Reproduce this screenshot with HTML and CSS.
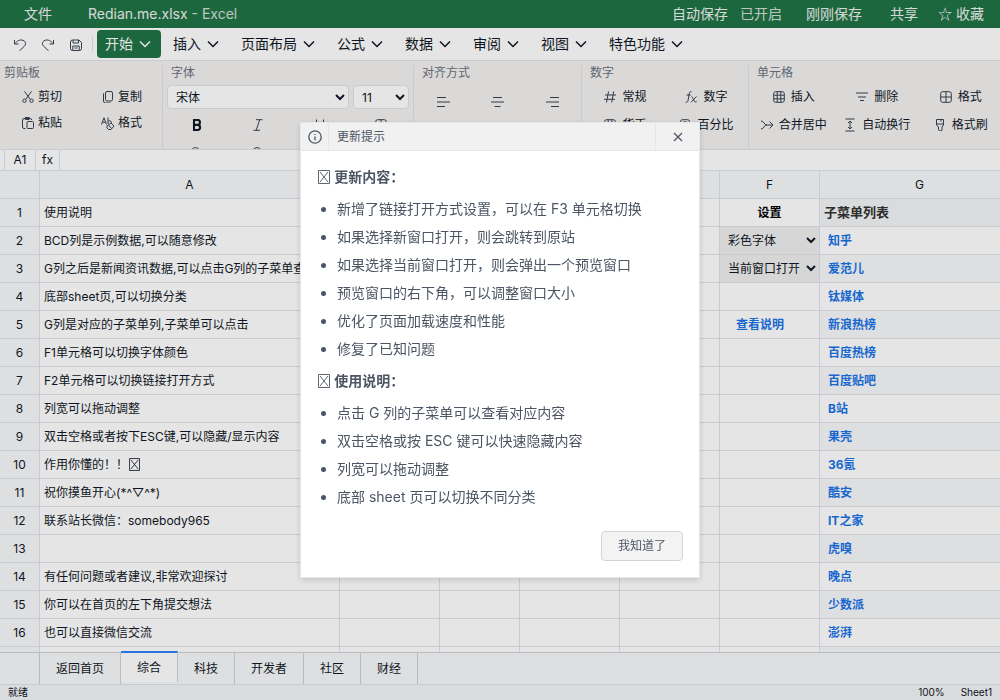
FILE: index.html
```html
<!DOCTYPE html>
<html lang="zh-CN">
<head>
    <meta charset="UTF-8">
    <meta name="viewport" content="width=device-width, initial-scale=1.0">
    <title>Redian.me.xlsx - Excel</title>
    <link rel="stylesheet" href="styles.css">
</head>
<body>
    <svg class="sprite">
        <symbol id="chevron" viewBox="0 0 16 16"><path d="M3 5.5l5 5 5-5"/></symbol>
        <symbol id="cell" viewBox="0 0 12 12"><rect x=".7" y=".7" width="10.6" height="10.6" rx="2"/><path d="M.7 6h10.6M6 .7v10.6"/></symbol>
        <symbol id="table" viewBox="0 0 12 12"><rect x=".7" y=".7" width="10.6" height="10.6" rx="2"/><path d="M.7 4.2h10.6M.7 7.8h10.6M4.2.7v10.6M7.8.7v10.6"/></symbol>
        <symbol id="box" viewBox="0 0 12 14"><path d="M.5.5h11v13H.5zM2 2l8 10M10 2L2 12"/></symbol>
    </svg>

    <div class="app">
        <div class="title-bar">
            <span class="file">文件</span>
            <span class="name">Redian.me.xlsx <span class="dim">- Excel</span></span>
            <div class="title-right">
                <span>自动保存</span>
                <span class="dim state">已开启</span>
                <span class="saved">刚刚保存</span>
                <span class="share">共享</span>
                <span><span class="star">☆</span> 收藏</span>
            </div>
        </div>

        <div class="menu-bar">
            <div class="quick">
                <svg class="q" viewBox="0 0 14 14"><path d="M1.500 3v4h4M1.800 6.700C4 4 7 2.200 10 3.300c3 1.200 3.200 4 1.300 6L6.300 14"/></svg>
                <svg class="q" viewBox="0 0 14 14"><path d="M12.500 3v4h-4M12.200 6.700C10 4 7 2.200 4 3.300c-3 1.200-3.200 4-1.300 6l5 4.700"/></svg>
                <svg class="q save" viewBox="0 0 14 14"><path d="M1.500 4a2 2 0 0 1 2-2H10l2.500 2.500v6a2 2 0 0 1-2 2h-7a2 2 0 0 1-2-2zM4 2v3h5.500V2M3.800 12.500V8h6.400v4.500M5.500 10h3"/></svg>
            </div>
            <span class="menu active">开始<svg><use href="#chevron"/></svg></span>
            <span class="menu">插入<svg><use href="#chevron"/></svg></span>
            <span class="menu">页面布局<svg><use href="#chevron"/></svg></span>
            <span class="menu">公式<svg><use href="#chevron"/></svg></span>
            <span class="menu">数据<svg><use href="#chevron"/></svg></span>
            <span class="menu">审阅<svg><use href="#chevron"/></svg></span>
            <span class="menu">视图<svg><use href="#chevron"/></svg></span>
            <span class="menu">特色功能<svg><use href="#chevron"/></svg></span>
        </div>

        <div class="ribbon">
            <div class="group clipboard">
                <div class="label">剪贴板</div>
                <div class="tools">
                    <span class="tool"><svg viewBox="0 0 12 12"><circle cx="2.500" cy="9.700" r="1.700"/><circle cx="9.500" cy="9.700" r="1.700"/><path d="M2.500.3l5.700 8M9.500.3l-5.700 8"/></svg>剪切</span>
                    <span class="tool"><svg viewBox="0 0 12 12"><rect x="3.500" y=".5" width="7" height="9.500" rx="1.500"/><path d="M1.500 2.500v7.500a2 2 0 0 0 2 2h5"/></svg>复制</span>
                    <span class="tool"><svg viewBox="0 0 12 12"><path d="M3.500 11.500H2a1.500 1.500 0 0 1-1.500-1.500V3A1.500 1.500 0 0 1 2 1.500h6.500A1.200 1.200 0 0 1 9.500 3M3.300.5h3.900v2H3.300z"/><rect x="5" y="4.500" width="6.500" height="7" rx="1"/></svg>粘贴</span>
                    <span class="tool"><svg class="brush" viewBox="0 0 14 13"><path d="M.5 7.500L3 .8l2.500 6.700M1.400 5.300h3.200M7 .5V7M7 4.500c2-2 4 0 3 2M6 9l4-3 3 3-3 3.500H7.500L6 11zM7.500 8l3 3.500"/></svg>格式</span>
                </div>
            </div>
            <div class="group font">
                <div class="label">字体</div>
                <div class="selects">
                    <select class="family"><option>宋体</option></select>
                    <select class="size"><option>11</option></select>
                </div>
                <div class="tools">
                    <span class="tool"><svg class="bold" viewBox="0 0 12 12"><path d="M3 1h3.500a2.400 2.400 0 0 1 0 4.900H3zM3 5.900h4a2.600 2.600 0 0 1 0 5.100H3z"/></svg></span>
                    <span class="tool"><svg viewBox="0 0 12 12"><path d="M4 .7h6.500M1.500 11.300H8M7.700.7l-3.500 10.600"/></svg></span>
                    <span class="tool"><svg viewBox="0 0 12 12"><path d="M2.500.5v5a3.500 3.500 0 0 0 7 0v-5M1.500 11.500h9"/></svg></span>
                    <span class="tool"><svg><use href="#cell"/></svg></span>
                    <span class="tool"><svg viewBox="0 0 12 12"><circle cx="4.500" cy="5" r="4.400"/></svg></span>
                    <span class="tool"><svg viewBox="0 0 12 12"><circle cx="5" cy="5" r="4.400"/></svg></span>
                </div>
            </div>
            <div class="group align">
                <div class="label">对齐方式</div>
                <div class="tools">
                    <span class="tool"><svg viewBox="0 0 13 12"><path d="M0 1.500h9M0 6h13M0 10.500h8"/></svg></span>
                    <span class="tool"><svg viewBox="0 0 13 12"><path d="M2 1.500h9M0 6h13M3.500 10.500h6"/></svg></span>
                    <span class="tool"><svg viewBox="0 0 13 12"><path d="M4 1.500h9M0 6h13M5 10.500h8"/></svg></span>
                </div>
            </div>
            <div class="group number">
                <div class="label">数字</div>
                <div class="tools">
                    <span class="tool"><svg viewBox="0 0 12 12"><path d="M4.500.5l-2 11M9.700.5l-2 11M1 4h11M0 8.300h11"/></svg>常规</span>
                    <span class="tool"><svg viewBox="0 0 12 12"><path d="M6.500.7C4.500 0 4.400 2 4 4L3 9.500C2.700 11 2 11.500.5 11.300M1.500 4h4.200M6.500 5.500c1.500 0 2 5.500 4 5.500.7 0 1-.3 1.300-.7M11.500 5.500L6 11.300"/></svg>数字</span>
                    <span class="tool"><svg><use href="#table"/></svg>货币</span>
                    <span class="tool"><svg viewBox="0 0 12 12"><rect x="1.500" y=".7" width="9" height="10.800" rx="2"/><path d="M4 3h4v2H4z"/></svg>百分比</span>
                </div>
            </div>
            <div class="group cells">
                <div class="label">单元格</div>
                <div class="tools">
                    <span class="tool"><svg><use href="#table"/></svg>插入</span>
                    <span class="tool"><svg viewBox="0 0 12 12"><path d="M0 2h12M2 6h8M4 9.500h4"/></svg>删除</span>
                    <span class="tool"><svg><use href="#cell"/></svg>格式</span>
                    <span class="tool"><svg viewBox="0 0 12 12"><path d="M0 2c3 0 3 4 6 4h6M0 10c3 0 3-4 6-4M8.500 2.500L12 6 8.500 9.500"/></svg>合并居中</span>
                    <span class="tool"><svg class="wrap" viewBox="0 0 12 14"><path d="M1.500 1h9M1.500 13h9M6 3v8M4 5l2-2 2 2M4 9l2 2 2-2"/></svg>自动换行</span>
                    <span class="tool"><svg viewBox="0 0 12 12"><path d="M2.500.5h7V6L8 8v3.500L6 12 4.500 11V8l-2-2zM2.500 5h7M7 .5v2"/></svg>格式刷</span>
                </div>
            </div>
        </div>

        <div class="formula-bar">
            <span class="ref">A1</span>
            <span class="fx">fx</span>
        </div>

        <div class="sheet">
            <table>
                <colgroup>
                    <col class="c-num"><col class="c-a"><col class="c-std"><col class="c-c"><col class="c-std"><col class="c-std"><col class="c-std"><col class="c-g">
                </colgroup>
                <thead>
                    <tr><th></th><th>A</th><th>B</th><th>C</th><th>D</th><th>E</th><th>F</th><th>G</th></tr>
                </thead>
                <tbody>
                    <tr><th>1</th><td>使用说明</td><td></td><td></td><td></td><td></td><td class="setting">设置</td><td class="list-title">子菜单列表</td></tr>
                    <tr><th>2</th><td>BCD列是示例数据,可以随意修改</td><td></td><td></td><td></td><td></td><td class="pick"><select><option>彩色字体</option></select></td><td class="link">知乎</td></tr>
                    <tr><th>3</th><td>G列之后是新闻资讯数据,可以点击G列的子菜单查看</td><td></td><td></td><td></td><td></td><td class="pick"><select><option>当前窗口打开</option></select></td><td class="link">爱范儿</td></tr>
                    <tr><th>4</th><td>底部sheet页,可以切换分类</td><td></td><td></td><td></td><td></td><td></td><td class="link">钛媒体</td></tr>
                    <tr><th>5</th><td>G列是对应的子菜单列,子菜单可以点击</td><td></td><td></td><td></td><td></td><td class="help">查看说明</td><td class="link">新浪热榜</td></tr>
                    <tr><th>6</th><td>F1单元格可以切换字体颜色</td><td></td><td></td><td></td><td></td><td></td><td class="link">百度热榜</td></tr>
                    <tr><th>7</th><td>F2单元格可以切换链接打开方式</td><td></td><td></td><td></td><td></td><td></td><td class="link">百度贴吧</td></tr>
                    <tr><th>8</th><td>列宽可以拖动调整</td><td></td><td></td><td></td><td></td><td></td><td class="link">B站</td></tr>
                    <tr><th>9</th><td>双击空格或者按下ESC键,可以隐藏/显示内容</td><td></td><td></td><td></td><td></td><td></td><td class="link">果壳</td></tr>
                    <tr><th>10</th><td>作用你懂的！！<svg class="box"><use href="#box"/></svg></td><td></td><td></td><td></td><td></td><td></td><td class="link">36氪</td></tr>
                    <tr><th>11</th><td>祝你摸鱼开心(*^▽^*)</td><td></td><td></td><td></td><td></td><td></td><td class="link">酷安</td></tr>
                    <tr><th>12</th><td>联系站长微信：somebody965</td><td></td><td></td><td></td><td></td><td></td><td class="link">IT之家</td></tr>
                    <tr><th>13</th><td></td><td></td><td></td><td></td><td></td><td></td><td class="link">虎嗅</td></tr>
                    <tr><th>14</th><td>有任何问题或者建议,非常欢迎探讨</td><td></td><td></td><td></td><td></td><td></td><td class="link">晚点</td></tr>
                    <tr><th>15</th><td>你可以在首页的左下角提交想法</td><td></td><td></td><td></td><td></td><td></td><td class="link">少数派</td></tr>
                    <tr><th>16</th><td>也可以直接微信交流</td><td></td><td></td><td></td><td></td><td></td><td class="link">澎湃</td></tr>
                    <tr><th></th><td></td><td></td><td></td><td></td><td></td><td></td><td class="link"></td></tr>
                </tbody>
            </table>
        </div>

        <div class="tabs">
            <span class="tab-space"></span>
            <span class="tab">返回首页</span>
            <span class="tab current">综合</span>
            <span class="tab">科技</span>
            <span class="tab">开发者</span>
            <span class="tab">社区</span>
            <span class="tab">财经</span>
        </div>
        <div class="status-bar">
            <span>就绪</span>
            <span class="zoom">100%</span>
            <span>Sheet1</span>
        </div>
    </div>

    <div class="overlay">
        <div class="dialog">
            <div class="dialog-head">
                <span class="info"><svg viewBox="0 0 14 14"><circle cx="7" cy="7" r="6.200"/><path d="M7 6.500v3.700M7 4v1"/></svg></span>
                <span class="dialog-title">更新提示</span>
                <span class="close"><svg viewBox="0 0 10 10"><path d="M1 1l8 8M9 1l-8 8"/></svg></span>
            </div>
            <div class="dialog-body">
                <h3><svg class="box"><use href="#box"/></svg> 更新内容：</h3>
                <ul>
                    <li>新增了链接打开方式设置，可以在 F3 单元格切换</li>
                    <li>如果选择新窗口打开，则会跳转到原站</li>
                    <li>如果选择当前窗口打开，则会弹出一个预览窗口</li>
                    <li>预览窗口的右下角，可以调整窗口大小</li>
                    <li>优化了页面加载速度和性能</li>
                    <li>修复了已知问题</li>
                </ul>
                <h3><svg class="box"><use href="#box"/></svg> 使用说明：</h3>
                <ul>
                    <li>点击 G 列的子菜单可以查看对应内容</li>
                    <li>双击空格或按 ESC 键可以快速隐藏内容</li>
                    <li>列宽可以拖动调整</li>
                    <li>底部 sheet 页可以切换不同分类</li>
                </ul>
                <div class="dialog-foot"><button>我知道了</button></div>
            </div>
        </div>
    </div>
</body>
</html>
```
FILE: styles.css
```css
* {
    box-sizing: border-box;
}
body {
    margin: 0;
    font-family: Inter, "Noto Sans CJK SC", sans-serif;
    font-size: 12px;
    line-height: 16px;
    color: #111827;
    overflow: hidden;
}
svg {
    fill: none;
    stroke: currentColor;
    flex: none;
}
select, button {
    font-family: inherit;
    color: inherit;
}
.sprite {
    display: none;
}
.box {
    width: 11px;
    height: 13px;
    margin: 0 1px;
    vertical-align: -2px;
    stroke-width: .9;
}
.app {
    display: flex;
    flex-direction: column;
    height: 700px;
    background: #fff;
}

/* title bar */
.title-bar {
    display: flex;
    align-items: center;
    height: 28px;
    padding: 0 16px 0 24px;
    background: #217346;
    color: #eef2ef;
    font-size: 14px;
    line-height: 20px;
    white-space: pre;
}
.name { margin-left: 36px; }
.dim { opacity: .85; }
.title-right {
    display: flex;
    margin-left: auto;
}
.state { margin-left: 12px; }
.saved { margin: 0 28px 0 24px; }
.share { margin-right: 20px; }
.star {
    font-family: "Noto Sans CJK SC", sans-serif;
    line-height: 1;
}

/* menu */
.menu-bar {
    display: flex;
    align-items: center;
    gap: 4px;
    height: 33px;
    border-bottom: 1px solid #dfe3e9;
    font-size: 14px;
    line-height: 20px;
}
.quick {
    display: flex;
    align-items: center;
    gap: 14px;
    width: 93px;
    height: 16px;
    padding-left: 13px;
    border-right: 1px solid #dfe3e9;
}
.q {
    width: 14px;
    height: 14px;
    color: #374151;
}
.save { margin-top: 2px; }
.menu {
    display: flex;
    align-items: center;
    gap: 4px;
    height: 28px;
    padding: 0 8px;
    border-radius: 4px;
}
.menu svg {
    width: 16px;
    height: 16px;
    stroke-width: 1.5;
}
.menu.active {
    background: #217346;
    color: #fff;
}

/* ribbon */
.ribbon {
    display: flex;
    height: 89px;
    background: #f3f2f1;
    border-bottom: 1px solid #dfe3e9;
    overflow: hidden;
}
.group {
    height: 84px;
    margin-top: 4px;
    border-right: 1px solid #dfe3e9;
    flex: none;
}
.group:last-child { border-right: 0; }
.label {
    height: 14px;
    line-height: 16px;
    padding-left: 8px;
    color: #6b7280;
}
.tools { display: grid; }
.tool {
    display: flex;
    align-items: center;
    justify-content: center;
    gap: 6px;
    height: 28px;
    white-space: nowrap;
}
.tool svg {
    width: 12px;
    height: 12px;
    color: #374151;
}
.clipboard { width: 163px; }
.clipboard .label { padding-left: 4px; }
.clipboard .tools {
    grid-template-columns: 80px 80px;
    padding: 5px 0 0 2px;
}
.clipboard .tool {
    gap: 4px;
    height: 26px;
}
.font { width: 251px; }
.selects {
    display: flex;
    gap: 4px;
    padding: 6px 4px 2px;
}
.selects select {
    height: 24px;
    padding: 0 4px;
    border: 1px solid #dfe3e9;
    border-radius: 4px;
    background: #fff;
    font-size: 12px;
}
.family { width: 182px; }
.size { width: 56px; }
.font .tools {
    grid-template-columns: repeat(4, 61.5px);
    padding-left: 3px;
}
.tool .bold {
    color: #111827;
    stroke-width: 2.1;
}
.align { width: 168px; }
.align .tools {
    grid-template-columns: repeat(3, 54.5px);
    padding: 9px 0 0 2px;
}
.align svg { width: 13px; }
.number { width: 167px; }
.number .tools {
    grid-template-columns: 81px 81px;
    padding: 4px 0 0 3px;
}
.cells { width: 260px; }
.cells .tools {
    grid-template-columns: repeat(3, 83.5px);
    padding: 4px 0 0 3px;
}
.tool .brush {
    width: 14px;
    height: 13px;
    margin: 0 -1px;
}
.tool .wrap { height: 14px; }

/* formula bar */
.formula-bar {
    display: flex;
    height: 21px;
    padding-left: 4px;
    border-bottom: 1px solid #dfe3e9;
    line-height: 20px;
    text-align: center;
}
.ref {
    width: 32px;
    border: solid #dfe3e9;
    border-width: 0 1px;
}
.fx {
    width: 24px;
    border-right: 1px solid #dfe3e9;
}

/* sheet */
.sheet {
    height: 481px;
    overflow: hidden;
}
table {
    width: 1020px;
    table-layout: fixed;
    border-collapse: separate;
    border-spacing: 0;
}
.c-num { width: 40px; }
.c-a { width: 300px; }
.c-c { width: 80px; }
.c-std { width: 100px; }
.c-g { width: 200px; }
th, td {
    height: 28px;
    padding: 0 4px;
    border: solid #dfe3e9;
    border-width: 0 1px 1px 0;
    font-weight: 400;
    white-space: nowrap;
    overflow: hidden;
}
th { background: #f8f9fa; }
.setting {
    text-align: center;
    font-weight: 700;
    color: #000;
}
.list-title {
    padding-bottom: 2px;
    background: #f3f4f6;
    color: #333;
    font-size: 13px;
    font-weight: 700;
}
.link, .help {
    padding-left: 8px;
    color: #1a73e8;
    font-weight: 700;
}
.help { padding-left: 16px; }
tr:nth-child(odd) .link { background: #f8f9fa; }
.pick {
    padding: 0;
    background: #efefef;
}
.pick select {
    display: block;
    width: 99px;
    height: 27px;
    padding: 0 0 0 4px;
    border: 0;
    background: #efefef;
    font-size: 12px;
}

/* tabs and status */
.tabs {
    display: flex;
    height: 33px;
    border-top: 1px solid #cdd1d6;
    border-bottom: 1px solid #dfe3e9;
    background: #f8f9fa;
    line-height: 31px;
}
.tab-space {
    width: 40px;
    border-right: 1px solid #cdd1d6;
}
.tab {
    padding: 0 16px;
    border-right: 1px solid #cdd1d6;
}
.current {
    height: 31px;
    margin-top: -2px;
    border-top: 2px solid #3182f6;
    background: #fff;
    line-height: 30px;
}
.status-bar {
    display: flex;
    flex: 1;
    align-items: center;
    gap: 16px;
    padding: 0 8px 1px;
    background: #f3f4f6;
    font-size: 10px;
    line-height: 14px;
}
.zoom { margin-left: auto; }

/* dialog */
.overlay {
    position: fixed;
    inset: 0;
    display: flex;
    align-items: center;
    justify-content: center;
    background: rgba(0, 0, 0, .1);
}
.dialog {
    width: 400px;
    height: 456px;
    border: 1px solid #e5e7eb;
    background: #fff;
    box-shadow: 0 2px 6px rgba(0, 0, 0, .15);
    color: #4b5563;
}
.dialog-head {
    display: flex;
    align-items: center;
    height: 28px;
    border-bottom: 1px solid #e5e7eb;
    background: #f1f1f1;
}
.info, .close {
    display: flex;
    align-items: center;
    justify-content: center;
    height: 27px;
}
.info {
    width: 28px;
    border-right: 1px solid #e5e7eb;
}
.info svg {
    width: 14px;
    height: 14px;
    stroke-width: 1.3;
}
.dialog-title {
    flex: 1;
    padding-left: 8px;
}
.close {
    width: 44px;
    border-left: 1px solid #e5e7eb;
}
.close svg {
    width: 10px;
    height: 10px;
    stroke-width: 1.3;
}
.dialog-body {
    padding: 16px;
    font-size: 14px;
}
h3 {
    margin: 0 0 8px;
    font-size: 14px;
    line-height: 20px;
}
h3 .box {
    width: 12px;
    height: 14px;
}
ul {
    margin: 0 0 8px;
    padding-left: 20px;
}
li { line-height: 28px; }
.dialog-foot {
    display: flex;
    justify-content: flex-end;
    padding-top: 12px;
}
.dialog-foot button {
    width: 82px;
    height: 30px;
    padding: 0;
    border: 1px solid #d1d5db;
    border-radius: 4px;
    background: #f3f3f4;
    font-size: 12px;
    line-height: 16px;
}
```
